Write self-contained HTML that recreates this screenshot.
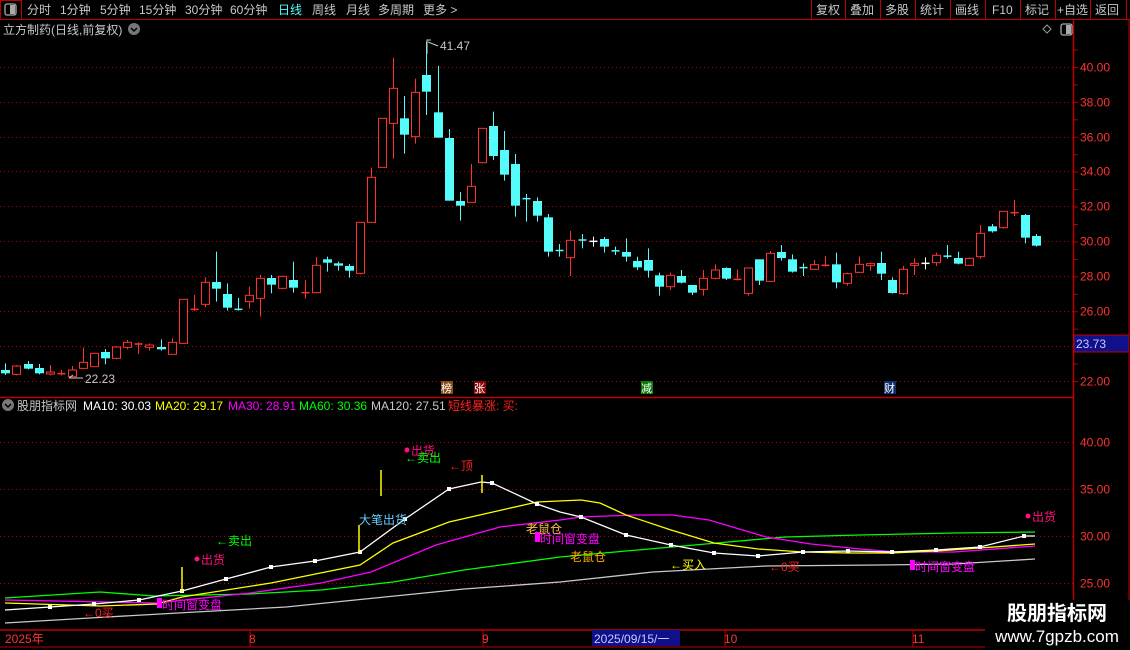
<!DOCTYPE html>
<html><head><meta charset="utf-8"><style>
*{margin:0;padding:0;box-sizing:border-box}
body{width:1130px;height:650px;background:#000;overflow:hidden;position:relative;font-family:"Liberation Sans","Noto Sans CJK SC",sans-serif;color:#c8c8c8;font-size:12px}
.a{position:absolute;white-space:nowrap;line-height:1}
svg{position:absolute;left:0;top:0}
</style></head><body>
<svg id="s" width="1130" height="650" xmlns="http://www.w3.org/2000/svg" font-family="Liberation Sans, Noto Sans CJK SC, sans-serif">
<!-- top bar -->
<line x1="0" y1="19.5" x2="1130" y2="19.5" stroke="#c00000"/>
<rect x="0.5" y="0.5" width="21" height="19" fill="none" stroke="#c00000"/>
<rect x="5" y="4" width="11" height="11" rx="2" fill="none" stroke="#aaa" stroke-width="1.3"/><rect x="10" y="5" width="5" height="9" fill="#aaa"/>
<g stroke="#c00000"><line x1="811.5" y1="0" x2="811.5" y2="19"/><line x1="845.5" y1="0" x2="845.5" y2="19"/><line x1="880.5" y1="0" x2="880.5" y2="19"/><line x1="915.5" y1="0" x2="915.5" y2="19"/><line x1="950.5" y1="0" x2="950.5" y2="19"/><line x1="985.5" y1="0" x2="985.5" y2="19"/><line x1="1020.5" y1="0" x2="1020.5" y2="19"/><line x1="1055.5" y1="0" x2="1055.5" y2="19"/><line x1="1090.5" y1="0" x2="1090.5" y2="19"/><line x1="1126.5" y1="0" x2="1126.5" y2="19"/></g>
<g font-size="12" fill="#c8c8c8">
<text x="27" y="14">分时</text><text x="60" y="14">1分钟</text><text x="100" y="14">5分钟</text><text x="139" y="14">15分钟</text><text x="185" y="14">30分钟</text><text x="230" y="14">60分钟</text><text x="278" y="14" fill="#54fcfc">日线</text><text x="312" y="14">周线</text><text x="346" y="14">月线</text><text x="378" y="14">多周期</text><text x="423" y="14">更多 &gt;</text>
<text x="816" y="14">复权</text><text x="850" y="14">叠加</text><text x="885" y="14">多股</text><text x="920" y="14">统计</text><text x="955" y="14">画线</text><text x="992" y="14">F10</text><text x="1025" y="14">标记</text><text x="1057" y="14">+自选</text><text x="1095" y="14">返回</text>
<text x="3" y="34">立方制药(日线,前复权)</text>
</g>
<circle cx="134" cy="29" r="6" fill="#777"/><path d="M131 28l3 3 3-3" stroke="#000" stroke-width="1.5" fill="none"/>
<path d="M1047 25l4 4-4 4-4-4z" fill="none" stroke="#999"/>
<rect x="1061" y="24" width="11" height="11" rx="2" fill="none" stroke="#aaa" stroke-width="1.3"/><rect x="1066" y="25" width="5" height="9" fill="#aaa"/>
<!-- axes -->
<line x1="1073.5" y1="20" x2="1073.5" y2="630" stroke="#c00000" stroke-width="1.5"/>
<line x1="1129" y1="20" x2="1129" y2="650" stroke="#c00000"/>
<line x1="0" y1="397.5" x2="1073" y2="397.5" stroke="#c00000" stroke-width="1.5"/>
<line x1="0" y1="630" x2="1130" y2="630" stroke="#c00000" stroke-width="1.5"/>
<line x1="0" y1="647" x2="1130" y2="647" stroke="#c00000"/>
<g id="grid" stroke="#b00000" stroke-dasharray="1,3"></g>
<g id="axl" font-size="12" fill="#ff3232"></g>
<rect x="1074" y="335" width="55" height="17" fill="#10108a" stroke="#c00000"/>
<text x="1076" y="348" font-size="12" fill="#c8c8ff">23.73</text>
<g id="cd"></g>
<!-- labels main -->
<g font-size="12" fill="#c8c8c8"><path d="M427 54V40h4M428 42l10 4" stroke="#c8c8c8" fill="none"/><text x="440" y="50">41.47</text>
<path d="M69 378h14M69 378l4-3" stroke="#c8c8c8" fill="none"/><text x="85" y="383">22.23</text></g>
<rect x="441" y="381" width="12" height="13" fill="#8a4a10"/><text x="441" y="392" font-size="11" fill="#fff">榜</text>
<rect x="474" y="381" width="12" height="13" fill="#8a0a0a"/><text x="474" y="392" font-size="11" fill="#fff">张</text>
<rect x="641" y="381" width="12" height="13" fill="#0a7a0a"/><text x="641" y="392" font-size="11" fill="#fff">减</text>
<rect x="884" y="381" width="12" height="13" fill="#10306a"/><text x="884" y="392" font-size="11" fill="#fff">财</text>
<!-- lower header -->
<circle cx="8" cy="405" r="6" fill="#777"/><path d="M5 404l3 3 3-3" stroke="#000" stroke-width="1.5" fill="none"/>
<g font-size="12"><text x="17" y="410" fill="#c8c8c8">股朋指标网</text><text x="83" y="410" fill="#fff">MA10: 30.03</text><text x="155" y="410" fill="#ffff00">MA20: 29.17</text><text x="228" y="410" fill="#ff00ff">MA30: 28.91</text><text x="299" y="410" fill="#00ff00">MA60: 30.36</text><text x="371" y="410" fill="#c8c8c8">MA120: 27.51</text><text x="448" y="410" fill="#ff2020">短线暴涨: 买:</text></g>
<g id="ma" fill="none" stroke-width="1.3"></g>
<g stroke="#ffff00" stroke-width="1.5"><line x1="182" y1="567" x2="182" y2="592"/><line x1="381" y1="470" x2="381" y2="496"/><line x1="359" y1="525" x2="359" y2="552"/><line x1="482" y1="475" x2="482" y2="493"/></g>
<g font-size="12">
<circle cx="197" cy="559" r="2.5" fill="#ff1080"/><text x="201" y="564" fill="#ff1080">出货</text>
<text x="216" y="545" fill="#00ff00">←卖出</text>
<circle cx="407" cy="450" r="2.5" fill="#ff1080"/><text x="411" y="455" fill="#ff1080">出货</text>
<text x="405" y="462" fill="#00ff00">←卖出</text>
<text x="449" y="470" fill="#ff2020">←顶</text>
<text x="359" y="524" fill="#66ccff">大笔出货</text>
<text x="83" y="617" fill="#ff2020">←0买</text>
<rect x="157" y="598" width="5" height="10" fill="#ff00ff"/><text x="162" y="609" fill="#ff00ff">时间窗变盘</text>
<text x="526" y="533" fill="#ffc040">老鼠仓</text>
<rect x="535" y="532" width="5" height="10" fill="#ff00ff"/><text x="540" y="543" fill="#ff00ff">时间窗变盘</text>
<text x="570" y="561" fill="#ffb000">老鼠仓</text>
<text x="670" y="569" fill="#ffff00">←买入</text>
<text x="769" y="571" fill="#ff2020">←0买</text>
<rect x="910" y="560" width="5" height="10" fill="#ff00ff"/><text x="915" y="571" fill="#ff00ff">时间窗变盘</text>
<circle cx="1028" cy="516" r="2.5" fill="#ff1080"/><text x="1032" y="521" fill="#ff1080">出货</text>
</g>
<!-- date axis -->
<g stroke="#c00000"><line x1="250" y1="630" x2="250" y2="647"/><line x1="483" y1="630" x2="483" y2="647"/><line x1="725" y1="630" x2="725" y2="647"/><line x1="913" y1="630" x2="913" y2="647"/></g>
<g font-size="12" fill="#ff3232"><text x="5" y="643">2025年</text><text x="249" y="643">8</text><text x="482" y="643">9</text><text x="724" y="643">10</text><text x="912" y="643">11</text></g>
<rect x="592" y="630" width="88" height="16" fill="#10108a"/><text x="594" y="643" font-size="12" fill="#c8c8ff">2025/09/15/一</text>
<rect x="985" y="600" width="145" height="50" fill="#000"/>
<text x="1057" y="620" font-size="20" font-weight="bold" fill="#fff" text-anchor="middle">股朋指标网</text>
<text x="1057" y="642" font-size="17" fill="#fff" text-anchor="middle">www.7gpzb.com</text>
</svg>
<script>
var NS="http://www.w3.org/2000/svg";
function el(p,t,a){var e=document.createElementNS(NS,t);for(var k in a)e.setAttribute(k,a[k]);document.getElementById(p).appendChild(e);return e;}
// grids main
for(var i=0;i<10;i++){var y=Math.round(66.7+i*34.9)+0.5;el("grid","line",{x1:0,y1:y,x2:1073,y2:y});var t=el("axl","text",{x:1080,y:y+4});t.textContent=(40-2*i).toFixed(2);if(40-2*i==24)t.textContent="";}
for(var i=0;i<4;i++){var y=442+i*47+0.5;el("grid","line",{x1:0,y1:y,x2:1073,y2:y});var t=el("axl","text",{x:1080,y:y+4});t.textContent=(40-5*i).toFixed(2);}
// ticks
for(var y=50;y<395;y+=17.45){el("grid","line",{x1:1073,y1:y,x2:1078,y2:y,"stroke-dasharray":"none"});}
// candles: color, bodyTop, bodyBot, wickTop, wickBot (zoomed y)
var C=[["C",1020,1030,1000,1035],["R",1008,1033,1005,1036],["C",1002,1016,993,1018],["C",1014,1030,1002,1033],["R",1026,1032,1005,1036],["R",1030,1032,1020,1036],["R",1020,1040,1008,1040],["R",997,1015,953,1017],["R",970,1010,968,1011],["C",966,985,957,1003],["R",951,985,948,988],["R",937,952,930,958],["R",940,944,937,972],["R",945,952,940,962],["C",951,958,928,962],["R",937,973,925,973],["R",808,940,808,940],["R",837,839,795,843],["R",757,823,742,832],["C",756,776,665,815],["C",792,833,760,842],["C",837,839,804,842],["R",796,815,770,836],["R",745,805,735,860],["C",744,764,735,790],["R",739,775,737,778],["C",750,773,695,788],["R",787,789,750,806],["R",706,788,681,790],["C",688,698,680,725],["C",700,707,695,722],["C",708,722,702,743],["R",577,730,577,733],["R",442,577,413,577],["R",265,412,265,412],["R",175,280,83,386],["C",265,314,198,371],["R",187,320,146,341],["C",135,185,35,255],["C",247,323,108,323],["C",324,512,297,512],["C",513,527,486,572],["R",469,517,402,518],["R",295,398,295,400],["C",288,378,245,390],["C",360,434,303,452],["C",402,527,372,560],["C",505,507,492,575],["C",513,557,502,575],["C",562,665,552,680],["C",660,663,642,680],["R",631,683,603,738],["C",629,631,612,655],["W",633,635,620,650],["C",627,650,621,668],["C",660,665,650,675],["C",666,680,625,695],["C",693,712,680,720],["C",690,722,655,743],["C",736,770,728,797],["R",736,770,728,780],["C",738,758,720,760],["C",765,788,765,795],["R",745,778,720,797],["R",720,745,703,748],["C",714,746,712,750],["R",747,749,718,752],["R",714,790,713,797],["C",688,752,688,765],["R",670,754,663,756],["C",666,684,645,692],["C",688,725,673,728],["C",712,714,700,738],["R",704,718,690,720],["R",704,708,678,710],["C",703,757,668,775],["R",731,760,728,767],["R",703,727,680,729],["R",701,707,698,722],["C",699,731,665,750],["C",750,789,742,791],["R",718,791,708,795],["R",700,706,685,735],["W",699,701,682,718],["R",676,698,668,708],["C",676,681,645,686],["C",684,701,665,703],["R",685,706,682,707],["R",610,680,585,686],["C",589,604,582,608],["R",544,593,544,596],["R",547,549,510,558],["C",555,623,552,640],["C",618,647,612,650]];
var col={R:"#ff3232",C:"#54fcfc",W:"#ffffff"};
C.forEach(function(c,i){var x=Math.round(5.4+i*11.08)+0.5;var f=function(z){return 30+z/3};var bt=f(c[1]),bb=f(c[2]),wt=f(c[3]),wb=f(c[4]);var k=col[c[0]];
el("cd","line",{x1:x,y1:wt,x2:x,y2:wb,stroke:k,"stroke-width":1});
if(bb-bt<2){el("cd","line",{x1:x-4,y1:(bt+bb)/2,x2:x+4,y2:(bt+bb)/2,stroke:k,"stroke-width":1.5});}
else if(c[0]=="R"){el("cd","rect",{x:x-4,y:bt,width:8,height:bb-bt,fill:"#000",stroke:k,"stroke-width":1});}
else{el("cd","rect",{x:x-4.5,y:bt,width:9,height:bb-bt,fill:k});}
});
var L={
"#c8c8c8":[[5,623],[107,617],[196,612],[286,607],[375,598],[464,589],[560,582],[653,572],[766,566],[879,565],[954,564],[1035,559]],
"#00ff00":[[5,598],[100,592],[154,596],[250,594],[321,590],[393,582],[464,570],[560,557],[615,552],[672,547],[728,542],[785,537],[860,535],[954,533],[1035,532]],
"#ff00ff":[[5,600],[157,603],[250,593],[321,583],[371,572],[436,545],[500,527],[560,520],[581,517],[634,515],[672,515],[709,520],[766,537],[811,544],[860,549],[898,552],[954,552],[1035,546]],
"#ffff00":[[5,603],[100,606],[157,604],[182,597],[271,583],[360,565],[393,543],[449,522],[537,502],[581,500],[600,503],[626,515],[671,530],[714,543],[758,549],[803,552],[848,553],[892,553],[936,551],[980,548],[1035,544]],
"#ffffff":[[5,610],[50,607],[94,604],[139,600],[182,591],[226,579],[271,567],[315,561],[360,552],[405,519],[449,489],[481,482],[492,483],[537,504],[560,512],[581,517],[626,535],[671,545],[714,553],[758,556],[803,552],[848,551],[892,552],[936,550],[980,547],[1024,536],[1035,536]]};
for(var k in L){el("ma","polyline",{points:L[k].map(function(p){return p.join(",")}).join(" "),stroke:k});}
[[50,607],[94,604],[139,600],[182,591],[226,579],[271,567],[315,561],[360,552],[405,519],[449,489],[492,483],[537,504],[581,517],[626,535],[671,545],[714,553],[758,556],[803,552],[848,551],[892,552],[936,550],[980,547],[1024,536]].forEach(function(p){el("ma","rect",{x:p[0]-2,y:p[1]-2,width:4,height:4,fill:"#fff",stroke:"none"});});
</script>
</body></html>
